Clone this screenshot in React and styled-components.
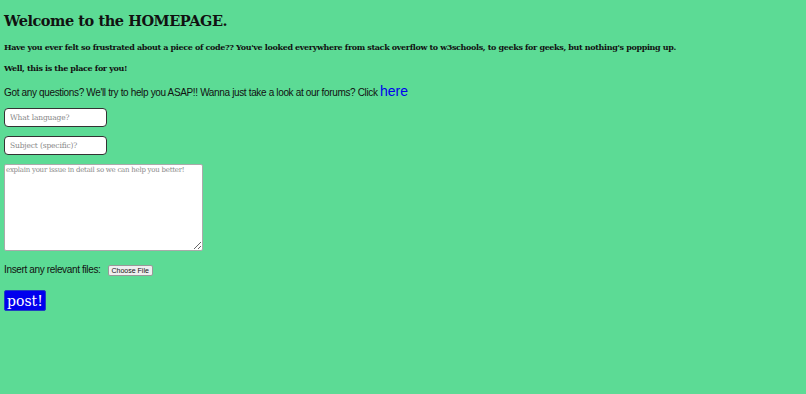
import styled, { createGlobalStyle } from "styled-components"

const Global = createGlobalStyle`
    html, body {
        margin: 0;
        background-color: #5cdb95;
        min-height: 100%;
    }
    body {
        padding: 4px;
        font-family: "Liberation Sans", Arial, sans-serif;
        color: #111;
    }
`

const Page = styled.div`
    display: flex;
    flex-direction: column;
    align-items: flex-start;
`

const Titre = styled.h1`
    font-family: "DejaVu Serif", serif;
    font-size: 14.5px;
    letter-spacing: -0.45px;
    line-height: 22px;
    font-weight: bold;
    margin: 6px 0 8px 0;
`

const Texte = styled.p`
    font-family: "DejaVu Serif", serif;
    font-size: 8px;
    letter-spacing: -0.35px;
    line-height: 14px;
    font-weight: bold;
    margin: 0 0 7px 0;
    white-space: nowrap;
`

const Question = styled.p`
    font-size: 10px;
    letter-spacing: -0.35px;
    line-height: 18px;
    margin: 0 0 6px 0;
    & a {
        color: #0000ee;
        font-size: 14px;
        letter-spacing: 0;
        text-decoration: none;
    }
`

const Champ = styled.input`
    width: 103px;
    height: 19px;
    box-sizing: border-box;
    border: 1px solid #333;
    border-radius: 4px;
    padding: 0 5px;
    font-family: "DejaVu Serif", serif;
    font-size: 7.5px;
    letter-spacing: -0.15px;
    margin-bottom: 9px;
    &::placeholder {
        color: #888;
    }
`

const Zone = styled.textarea`
    width: 199px;
    height: 87px;
    box-sizing: border-box;
    border: 1px solid #aaa;
    border-radius: 2px;
    padding: 1px;
    font-family: "DejaVu Serif", serif;
    font-size: 7px;
    letter-spacing: -0.25px;
    margin: 0 0 12px 0;
    &::placeholder {
        color: #888;
    }
`

const Fichiers = styled.div`
    display: flex;
    align-items: center;
    gap: 7px;
    font-size: 10px;
    letter-spacing: -0.35px;
    line-height: 14px;
    margin-bottom: 13px;
`

const Choisir = styled.button`
    font-family: "Liberation Sans", Arial, sans-serif;
    font-size: 7px;
    letter-spacing: 0;
    padding: 1px 3px;
    background: #efefef;
    border: 1px solid #999;
    border-radius: 2px;
    color: #111;
`

const Poster = styled.button`
    background-color: #0000ee;
    color: white;
    font-family: "DejaVu Serif", serif;
    font-size: 14px;
    border: 1px solid #2040c0;
    border-radius: 2px;
    padding: 0 2px;
    height: 21px;
`

export default function App() {
    return (
        <Page>
            <Global />
            <Titre>Welcome to the HOMEPAGE.</Titre>
            <Texte>Have you ever felt so frustrated about a piece of code?? You've looked everywhere from stack overflow to w3schools, to geeks for geeks, but nothing's popping up.</Texte>
            <Texte>Well, this is the place for you!</Texte>
            <Question>Got any questions? We'll try to help you ASAP!! Wanna just take a look at our forums? Click <a href="#">here</a></Question>
            <Champ placeholder="What language?" />
            <Champ placeholder="Subject (specific)?" />
            <Zone placeholder="explain your issue in detail so we can help you better!" />
            <Fichiers>
                Insert any relevant files:
                <Choisir>Choose File</Choisir>
            </Fichiers>
            <Poster>post!</Poster>
        </Page>
    )
}
